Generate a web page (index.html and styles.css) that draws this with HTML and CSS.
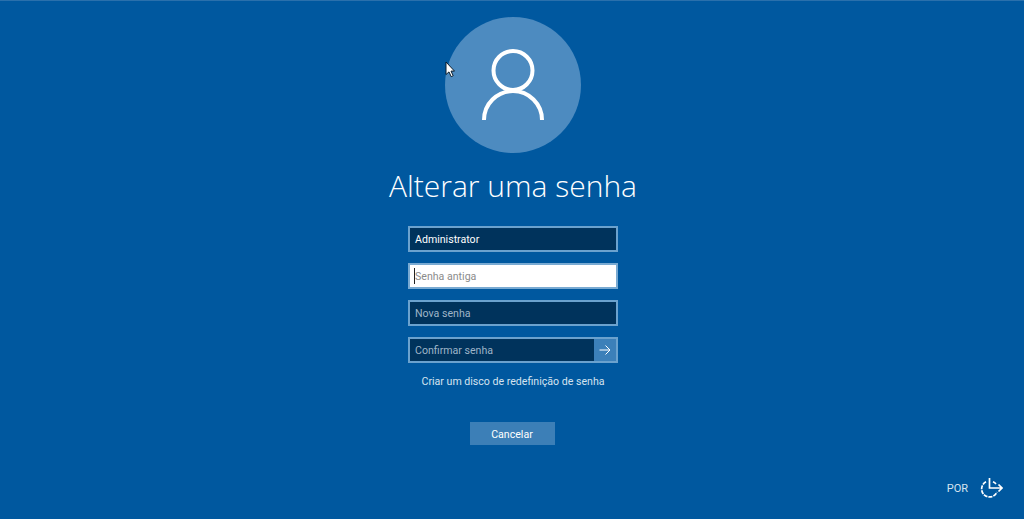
FILE: index.html
```html
<!DOCTYPE html>
<html lang="pt">
<head>
<meta charset="utf-8">
<title>Alterar uma senha</title>
<link rel="stylesheet" href="styles.css">
</head>
<body>
<main class="screen">
  <div class="avatar">
    <svg class="avatar-icon" viewBox="0 0 62 71" width="62" height="71" fill="none" stroke="#fff" stroke-width="4">
      <circle cx="31" cy="21.500" r="19.500"/>
      <path d="M2 71a29 29 0 0 1 58 0"/>
    </svg>
  </div>
  <svg class="cursor" viewBox="0 0 10 17" width="10" height="17"><path d="M1 1v12.500l3-2.600 2.200 4.800 2-1-2.200-4.600H9.500z" fill="#fff" stroke="#0b1d2c" stroke-width="1"/></svg>
  <h1 class="title">Alterar uma senha</h1>
  <form class="fields">
    <div class="field field-value">Administrator</div>
    <div class="field field-active"><span class="caret"></span>Senha antiga</div>
    <div class="field">Nova senha</div>
    <div class="field field-submit">
      <span class="field-text">Confirmar senha</span>
      <span class="go">
        <svg viewBox="0 0 12 12" width="12" height="12" fill="none" stroke="#fff" stroke-width="1"><path d="M0.500 6H11M6.500 1.500 11 6l-4.500 4.500"/></svg>
      </span>
    </div>
  </form>
  <a class="link">Criar um disco de redefinição de senha</a>
  <button class="cancel" type="button">Cancelar</button>
  <div class="tray">
    <span class="lang">POR</span>
    <svg class="ease" viewBox="0 0 23 22" width="23" height="22" fill="none" stroke="#fff" stroke-width="1.700">
      <path d="M6 4.800A8 8 0 1 0 17 15" stroke-dasharray="4 1"/>
      <path d="M9.500 1v10H22M18.500 7.500 22 11l-3.500 3.500M13 4.800a8 8 0 0 1 3 2.200"/>
    </svg>
  </div>
</main>
</body>
</html>
```
FILE: styles.css
```css
* { box-sizing: border-box; }
html, body { margin: 0; height: 100%; overflow: hidden; }
body { background: #00589f; font-family: Roboto, "Open Sans", sans-serif; color: #fff; }
.screen {
  position: relative;
  height: 519px;
  border-top: 1px solid #2a70ac;
  padding: 16px 0 0 2px;
  display: flex;
  flex-direction: column;
  align-items: center;
}
.avatar {
  width: 136px;
  height: 136px;
  border-radius: 50%;
  background: #4d8bc0;
  display: flex;
  align-items: center;
  justify-content: center;
  flex: none;
}
.avatar-icon { margin-top: -1px; }
.cursor { position: absolute; left: 445px; top: 60px; }
.title {
  margin: 10px 0 0;
  height: 46px;
  font-family: "Open Sans", "Noto Sans", sans-serif;
  font-size: 30px;
  line-height: 46px;
  font-weight: 300;
  letter-spacing: 0;
}
.fields { margin-top: 17px; display: flex; flex-direction: column; gap: 11px; width: 210px; }
.field {
  height: 26px;
  border: 2px solid #6ba2ce;
  background: #00335c;
  color: #9fb5c8;
  font-size: 10.600px;
  line-height: 24px;
  padding-left: 5px;
  white-space: nowrap;
}
.field-value { color: #fff; }
.field-active { background: #fff; border-color: #79aad2; color: #8b8b8b; position: relative; }
.caret { position: absolute; left: 4px; top: 3px; width: 1px; height: 16px; background: #222; }
.field-submit { display: flex; padding-right: 0; }
.field-text { flex: 1; }
.go {
  width: 22px;
  height: 22px;
  background: #3c80b9;
  display: flex;
  align-items: center;
  justify-content: center;
}
.link { margin-top: 11px; font-size: 10.600px; line-height: 16px; color: #d5e3ef; }
.cancel {
  margin: 32px 2px 0 0;
  width: 85px;
  height: 23px;
  border: 0;
  padding: 0;
  background: #3c7fb7;
  color: #fff;
  font: 10.600px/25px Roboto, "Open Sans", sans-serif;
}
.tray {
  position: absolute;
  right: 21px;
  bottom: 20px;
  display: flex;
  align-items: center;
  gap: 12px;
}
.lang { font-size: 11px; color: #d5e3ef; }
```
